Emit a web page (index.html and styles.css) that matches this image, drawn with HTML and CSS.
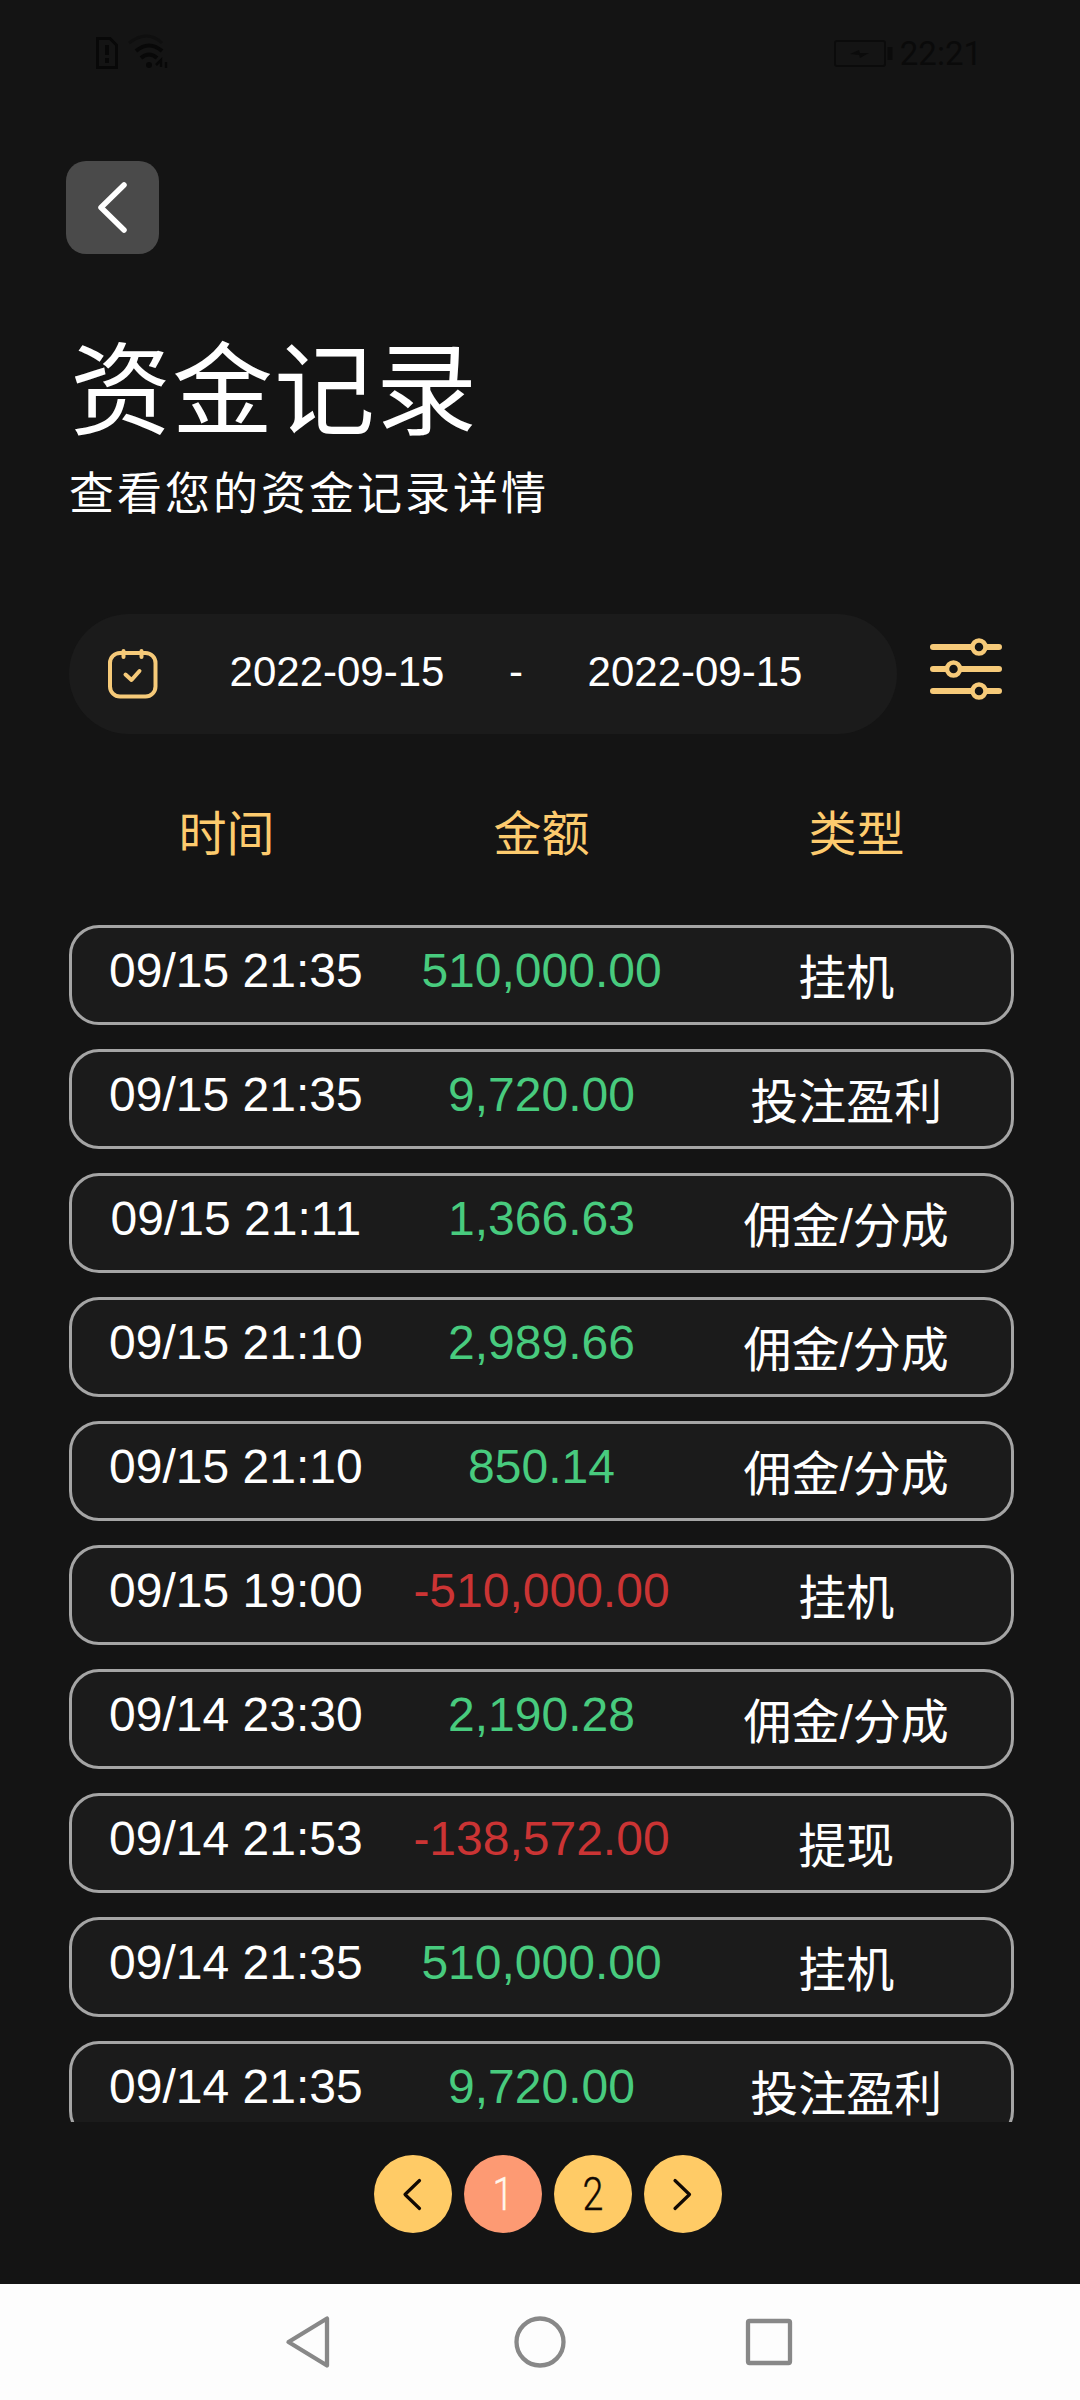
FILE: index.html
```
<!DOCTYPE html>
<html lang="zh-CN">
<head>
<meta charset="utf-8">
<title>资金记录</title>
<link rel="stylesheet" href="styles.css">
</head>
<body>
<div class="screen">
  <div class="status">
    <svg class="status-left" width="78" height="40" viewBox="0 0 78 40" fill="none" stroke="#080808" stroke-width="3">
      <path d="M4.500 4.500H17L23.500 11V33.500H4.500Z"/>
      <path d="M14 11v10M14 24v5" stroke-width="4"/>
      <path d="M36 9Q54-5 69 9" stroke="#0f0f0f"/>
      <path d="M43 17Q56 6 69 17M48 24Q56 17 64 24" stroke-width="4"/>
      <circle cx="56" cy="31" r="3" fill="#080808" stroke="none"/>
      <path d="M63 31l5-5v7M73 28v6" stroke-width="2.500"/>
    </svg>
    <div class="status-right">
      <svg width="60" height="30" viewBox="0 0 60 30" fill="none" stroke="#0b0b0b" stroke-width="2">
        <rect x="2" y="2" width="50" height="25" rx="2"/>
        <path d="M17 15l9-4 1 3h9l-9 5-1-3z" fill="#0b0b0b" stroke="none"/>
        <path d="M57 8v13" stroke-width="5"/>
      </svg>
      <span class="clock">22:21</span>
    </div>
  </div>

  <button class="back" aria-label="返回">
    <svg width="93" height="93" viewBox="0 0 93 93" fill="none" stroke="#fff" stroke-width="5.500" stroke-linecap="round" stroke-linejoin="round"><path d="M58 24L35 46.500L58 69"/></svg>
  </button>

  <h1 class="title">资金记录</h1>
  <p class="subtitle">查看您的资金记录详情</p>

  <div class="filters">
    <div class="range">
      <svg class="calendar" width="50" height="52" viewBox="0 0 50 52" fill="none" stroke="#f6ca79" stroke-width="4" stroke-linecap="round" stroke-linejoin="round">
        <rect x="2" y="5" width="45.500" height="43.500" rx="10"/>
        <path d="M15.500 3v6M33.500 3v6M17.500 26.500l6 5.500 8-9"/>
      </svg>
      <span class="date">2022-09-15</span>
      <span class="dash">-</span>
      <span class="date">2022-09-15</span>
    </div>
    <svg class="sliders" width="74" height="64" viewBox="0 0 74 64" stroke="#f6ca79" fill="#141414" stroke-linecap="round">
      <path d="M4 10H70M4 32H70M4 54H70" stroke-width="6"/>
      <g stroke-width="4.500"><circle cx="50" cy="10" r="6.500"/><circle cx="24.500" cy="32" r="6.500"/><circle cx="50" cy="54" r="6.500"/></g>
    </svg>
  </div>

  <div class="heads"><span>时间</span><span>金额</span><span>类型</span></div>

  <div class="list">
    <div class="row"><span class="num">09/15 21:35</span><span class="num up">510,000.00</span><span class="kind">挂机</span></div>
    <div class="row"><span class="num">09/15 21:35</span><span class="num up">9,720.00</span><span class="kind">投注盈利</span></div>
    <div class="row"><span class="num">09/15 21:<span class="tight">1</span>1</span><span class="num up">1,366.63</span><span class="kind">佣金/分成</span></div>
    <div class="row"><span class="num">09/15 21:10</span><span class="num up">2,989.66</span><span class="kind">佣金/分成</span></div>
    <div class="row"><span class="num">09/15 21:10</span><span class="num up">850.14</span><span class="kind">佣金/分成</span></div>
    <div class="row"><span class="num">09/15 19:00</span><span class="num down">-510,000.00</span><span class="kind">挂机</span></div>
    <div class="row"><span class="num">09/14 23:30</span><span class="num up">2,190.28</span><span class="kind">佣金/分成</span></div>
    <div class="row"><span class="num">09/14 21:53</span><span class="num down">-138,572.00</span><span class="kind">提现</span></div>
    <div class="row"><span class="num">09/14 21:35</span><span class="num up">510,000.00</span><span class="kind">挂机</span></div>
    <div class="row"><span class="num">09/14 21:35</span><span class="num up">9,720.00</span><span class="kind">投注盈利</span></div>
  </div>

  <div class="pager">
    <span class="page"><svg width="78" height="78" viewBox="0 0 78 78"><path d="M45.500 25.500L31 39.500L45.500 53.500"/></svg></span>
    <span class="page current"><span class="digit">1</span></span>
    <span class="page"><span class="digit">2</span></span>
    <span class="page"><svg width="78" height="78" viewBox="0 0 78 78"><path d="M31 25.500L45.500 39.500L31 53.500"/></svg></span>
  </div>

  <div class="navbar">
    <svg width="54" height="56" viewBox="0 0 54 56"><path d="M43 4.500V51.500L4.500 28Z"/></svg>
    <svg width="54" height="56" viewBox="0 0 54 56"><circle cx="27" cy="28" r="23.500"/></svg>
    <svg width="54" height="56" viewBox="0 0 54 56"><rect x="6" y="7" width="42" height="42" rx="1.500"/></svg>
  </div>
</div>
</body>
</html>
```
FILE: styles.css
```
* { box-sizing: border-box; }
body { margin: 0; background: #141414; }
.screen {
  width: 1080px; height: 2400px; overflow: hidden;
  display: flex; flex-direction: column;
  background: #141414; color: #fff;
  font-family: "Noto Sans CJK SC", sans-serif;
}
.status {
  height: 161px; flex: none; padding: 34px 98px 0 93px;
  display: flex; justify-content: space-between; align-items: flex-start;
}
.status-right { display: flex; align-items: center; gap: 7px; padding-top: 3px; }
.clock { font: 33px/33px Roboto, sans-serif; color: #0a0a0a; }
.back {
  flex: none; width: 93px; height: 93px; margin-left: 66px; padding: 0;
  border: 0; border-radius: 20px; background: #4a4a4a;
}
.back svg { display: block; }
.title {
  margin: 77px 0 0 70px; flex: none;
  font-size: 101px; line-height: 104px; font-weight: 400; letter-spacing: 1px;
}
.subtitle {
  margin: 33px 0 0 69px; flex: none;
  font-size: 45px; line-height: 45px; letter-spacing: 3px;
}
.filters {
  margin: 101px 0 0 69px; flex: none; height: 120px;
  display: flex; align-items: center; gap: 32px;
}
.range {
  width: 828px; height: 120px; border-radius: 60px; background: #1b1b1b;
  display: flex; align-items: center; padding-left: 39px;
}
.date, .dash { font: 42px/42px "Liberation Sans", Arial, sans-serif; text-align: center; padding-bottom: 4px; }
.date { width: 216px; }
.dash { width: 142px; }
.calendar { margin-right: 71px; }
.sliders { margin-bottom: 10px; }
.heads {
  margin: 72px 66px 0 69px; flex: none;
  display: grid; grid-template-columns: repeat(3, 1fr);
  text-align: center; color: #fdcb6e; font-size: 48px; line-height: 48px;
}
.list {
  margin-top: 71px; height: 1197px; flex: none; overflow: hidden;
  padding: 0 66px 0 69px; display: flex; flex-direction: column; gap: 24px;
}
.row {
  height: 100px; flex: none; border: 3px solid #a5a5a5; border-radius: 30px;
  background: #1b1b1b; padding: 19px 11px 0;
  display: grid; grid-template-columns: repeat(3, 1fr); text-align: center;
}
.num { font: 48px/48px "Liberation Sans", Arial, sans-serif; }
.tight { letter-spacing: -3px; }
.kind {
  font: 48px/48px "Liberation Sans", "Noto Sans CJK SC", sans-serif;
  padding: 8px 2px 0 0;
}
.up { color: #48cb7e; }
.down { color: #cb3434; }
.pager { margin: 33px 0 0 374px; display: flex; gap: 12px; flex: none; }
.page {
  width: 78px; height: 78px; border-radius: 50%; background: #ffcb66; color: #110904;
  display: flex; align-items: center; justify-content: center;
}
.page svg { fill: none; stroke: #110904; stroke-width: 3.200; stroke-linecap: round; stroke-linejoin: round; }
.current { background: #fd9a73; color: #fff6ec; }
.digit { font: 300 47px/78px Roboto, sans-serif; transform: scaleX(.8); -webkit-text-stroke: .4px currentColor; }
.navbar {
  margin-top: 51px; flex: 1; background: #fdfdfd;
  display: flex; justify-content: center; gap: 175px; padding-top: 30px;
}
.navbar svg { fill: none; stroke: #888; stroke-width: 4.300; stroke-linejoin: round; }
```
